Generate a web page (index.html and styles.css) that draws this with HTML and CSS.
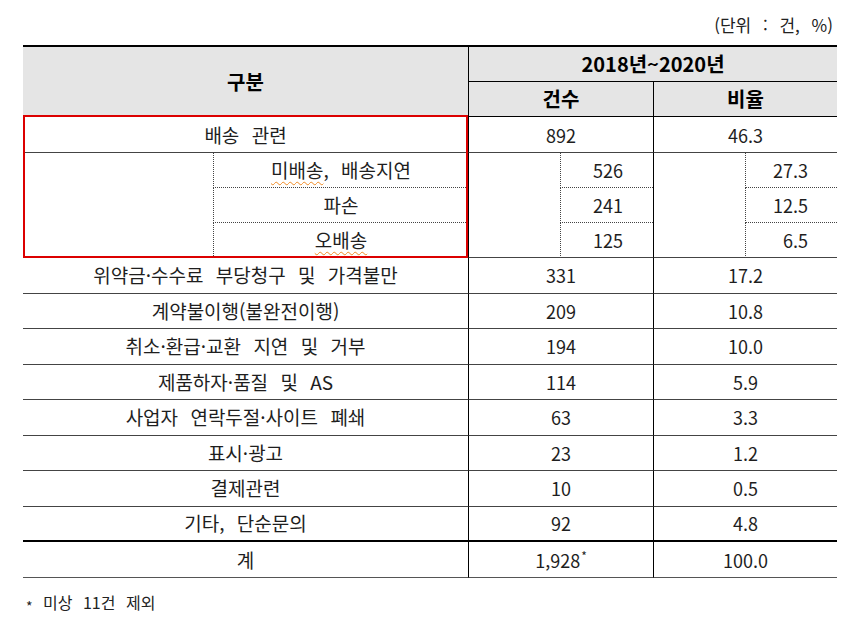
FILE: index.html
```html
<!DOCTYPE html>
<html lang="ko">
<head>
<meta charset="utf-8">
<link rel="stylesheet" href="styles.css">
</head>
<body>
<div class="page">
  <div class="unit">(단위 : 건, %)</div>
  <div class="table-wrap">
    <table class="stats">
      <colgroup>
        <col class="c1"><col class="c2"><col class="c3"><col class="c4"><col class="c5"><col class="c6">
      </colgroup>
      <thead>
        <tr class="h1">
          <th colspan="2" rowspan="2" class="head-cat">구분</th>
          <th colspan="4" class="head-period vl">2018년~2020년</th>
        </tr>
        <tr class="h2">
          <th colspan="2" class="vl">건수</th>
          <th colspan="2" class="vl">비율</th>
        </tr>
      </thead>
      <tbody>
        <tr class="r main-sep">
          <td colspan="2" class="lbl">배송 관련</td>
          <td colspan="2" class="vl">892</td>
          <td colspan="2" class="vl">46.3</td>
        </tr>
        <tr class="r sub">
          <td rowspan="3" class="blank"></td>
          <td class="sub-label lbl dl"><span class="spell">미배송</span>, 배송지연</td>
          <td rowspan="3" class="blank vl"></td>
          <td class="sub-num dl">526</td>
          <td rowspan="3" class="blank vl"></td>
          <td class="sub-num dl">27.3</td>
        </tr>
        <tr class="r sub">
          <td class="sub-label lbl dl">파손</td>
          <td class="sub-num dl">241</td>
          <td class="sub-num dl">12.5</td>
        </tr>
        <tr class="r sub last">
          <td class="sub-label lbl dl"><span class="spell">오배송</span></td>
          <td class="sub-num dl">125</td>
          <td class="sub-num dl">6.5</td>
        </tr>
        <tr class="r">
          <td colspan="2" class="lbl">위약금·수수료 부당청구 및 가격불만</td>
          <td colspan="2" class="vl">331</td>
          <td colspan="2" class="vl">17.2</td>
        </tr>
        <tr class="r">
          <td colspan="2" class="lbl">계약불이행(불완전이행)</td>
          <td colspan="2" class="vl">209</td>
          <td colspan="2" class="vl">10.8</td>
        </tr>
        <tr class="r">
          <td colspan="2" class="lbl">취소·환급·교환 지연 및 거부</td>
          <td colspan="2" class="vl">194</td>
          <td colspan="2" class="vl">10.0</td>
        </tr>
        <tr class="r">
          <td colspan="2" class="lbl">제품하자·품질 및 AS</td>
          <td colspan="2" class="vl">114</td>
          <td colspan="2" class="vl">5.9</td>
        </tr>
        <tr class="r">
          <td colspan="2" class="lbl">사업자 연락두절·사이트 폐쇄</td>
          <td colspan="2" class="vl">63</td>
          <td colspan="2" class="vl">3.3</td>
        </tr>
        <tr class="r">
          <td colspan="2" class="lbl">표시·광고</td>
          <td colspan="2" class="vl">23</td>
          <td colspan="2" class="vl">1.2</td>
        </tr>
        <tr class="r">
          <td colspan="2" class="lbl">결제관련</td>
          <td colspan="2" class="vl">10</td>
          <td colspan="2" class="vl">0.5</td>
        </tr>
        <tr class="r before-total">
          <td colspan="2" class="lbl">기타, 단순문의</td>
          <td colspan="2" class="vl">92</td>
          <td colspan="2" class="vl">4.8</td>
        </tr>
        <tr class="r total">
          <td colspan="2" class="lbl">계</td>
          <td colspan="2" class="vl">1,928<sup class="mark">*</sup></td>
          <td colspan="2" class="vl">100.0</td>
        </tr>
      </tbody>
    </table>
    <div class="highlight"></div>
  </div>
  <p class="note"><span class="star">*</span> 미상 11건 제외</p>
</div>
</body>
</html>
```

FILE: styles.css
```css
html, body {
  margin: 0;
  padding: 0;
  background: #ffffff;
}

body {
  font-family: "Noto Sans CJK KR", "Noto Sans", sans-serif;
  color: #1e1e1e;
}

.page {
  width: 814px;
  padding: 14px 0 0 23px;
}

.unit {
  text-align: right;
  padding-right: 4px;
  font-size: 17px;
  word-spacing: 7px;
  line-height: 22px;
  height: 22px;
  margin-bottom: 9px;
  color: #222;
}

.table-wrap {
  position: relative;
  width: 814px;
}

.stats {
  width: 814px;
  table-layout: fixed;
  border-collapse: separate;
  border-spacing: 0;
  border-top: 2px solid #000;
  font-size: 18px;
}

.c1 { width: 190px; }
.c2 { width: 255px; }
.c3 { width: 92px; }
.c4 { width: 93px; }
.c5 { width: 92px; }
.c6 { width: 92px; }

.stats th,
.stats td {
  padding: 0;
  text-align: center;
  vertical-align: middle;
  line-height: 22px;
  white-space: nowrap;
}

.stats td.lbl {
  font-size: 19px;
  word-spacing: 7px;
}

.stats th {
  background: #e5e5e5;
  font-weight: bold;
  font-size: 20px;
  color: #000;
}

.stats .h1 { height: 35px; }
.stats .h2 { height: 35px; }

.head-cat {
  border-bottom: 1px solid #000;
}

.head-period {
  border-bottom: 1px solid #000;
}

.h2 th {
  border-bottom: 1px solid #000;
}

.vl {
  border-left: 1px solid #000;
}

.dl {
  border-left: 1px dotted #444;
}

.r {
  height: 35.5px;
}

.r td {
  border-bottom: 1px solid #444;
}

.main-sep {
  height: 36px;
}

.sub {
  height: 35px;
}

.sub td.sub-label,
.sub td.sub-num {
  border-bottom: 1px dotted #444;
}

.sub.last td.sub-label,
.sub.last td.sub-num {
  border-bottom: 1px solid #444;
}

.sub td.blank {
  border-bottom: 1px solid #444;
}

.sub-num {
  text-align: right !important;
  padding-right: 30px !important;
}

.stats td.sub-num:last-child {
  padding-right: 29px !important;
}

.spell {
  text-decoration: underline wavy #f08a24;
  text-decoration-thickness: 1px;
  text-underline-offset: 3px;
}

.before-total td {
  border-bottom: 2px solid #000;
}

.total {
  height: 36px;
}

.total td {
  border-bottom: 1px solid #555;
}

.mark {
  font-size: 12px;
  vertical-align: top;
  line-height: 14px;
  margin-left: 1px;
}

.highlight {
  position: absolute;
  left: 0;
  top: 70px;
  width: 445px;
  height: 143px;
  box-sizing: border-box;
  border: 2px solid #dc0000;
  pointer-events: none;
}

.note {
  margin: 14px 0 0 3px;
  font-size: 16px;
  word-spacing: 6px;
  line-height: 20px;
  color: #222;
}

.star {
  font-size: 14px;
  vertical-align: -3px;
}
```
